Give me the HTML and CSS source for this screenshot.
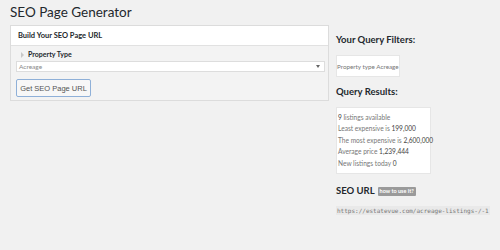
FILE: index.html
```html
<!DOCTYPE html>
<html lang="en">
<head>
    <meta charset="UTF-8">
    <title>SEO Page Generator</title>
    <link rel="stylesheet" href="styles.css">
</head>
<body>
    <div class="wrap">
        <h1>SEO Page Generator</h1>
        <div class="columns">
            <div class="main">
                <div class="panel">
                    <div class="panel-head">Build Your SEO Page URL</div>
                    <div class="panel-body">
                        <div class="field-label"><span class="toggle"></span>Property Type</div>
                        <div class="select">
                            <span>Acreage</span>
                            <span class="caret"></span>
                        </div>
                        <button class="btn">Get SEO Page URL</button>
                    </div>
                </div>
            </div>
            <div class="side">
                <h2>Your Query Filters:</h2>
                <div class="box filters">Property type Acreage</div>

                <h2>Query Results:</h2>
                <div class="box results">
                    <div><b>9</b> listings available</div>
                    <div>Least expensive is <b>199,000</b></div>
                    <div>The most expensive is <b>2,600,000</b></div>
                    <div>Average price <b>1,239,444</b></div>
                    <div>New listings today <b>0</b></div>
                </div>

                <h2 class="url-title">SEO URL <span class="badge">how to use it?</span></h2>
                <code class="url">https://estatevue.com/acreage-listings-/-1</code>
            </div>
        </div>
    </div>
</body>
</html>
```

FILE: styles.css
```css
* {
    margin: 0;
    padding: 0;
    box-sizing: border-box;
}

body {
    font-family: Lato, "Open Sans", sans-serif;
    background: #f1f1f1;
    color: #23282d;
    width: 500px;
    height: 250px;
    overflow: hidden;
}

.wrap {
    padding: 2px 0 0 10px;
}

h1 {
    font-size: 13.5px;
    font-weight: 400;
    line-height: 20px;
    margin-bottom: 3px;
}

.columns {
    display: flex;
    gap: 7px;
}

.main {
    width: 319px;
    flex-shrink: 0;
}

.panel {
    border: 1px solid #dcdcdc;
    background: #f3f3f3;
}

.panel-head {
    background: #fff;
    border-bottom: 1px solid #e1e1e1;
    font-size: 7.5px;
    font-weight: 700;
    line-height: 19px;
    padding-left: 7px;
}

.panel-body {
    padding: 3px 3px 3px 5px;
}

.field-label {
    display: flex;
    align-items: center;
    font-size: 7px;
    font-weight: 700;
    line-height: 11px;
    margin-bottom: 1px;
}

.toggle {
    width: 0;
    height: 0;
    border-top: 3px solid transparent;
    border-bottom: 3px solid transparent;
    border-left: 3px solid #c8c8c8;
    margin: 0 4px 0 5px;
}

.select {
    display: flex;
    justify-content: space-between;
    align-items: center;
    height: 11px;
    background: #fff;
    border: 1px solid #ddd;
    font-size: 6.5px;
    color: #888;
    padding: 0 4px 0 2px;
}

.caret {
    width: 0;
    height: 0;
    border-left: 2px solid transparent;
    border-right: 2px solid transparent;
    border-top: 3px solid #666;
}

.btn {
    display: block;
    margin-top: 7px;
    width: 75px;
    height: 18px;
    font-family: "Liberation Sans", sans-serif;
    font-size: 7.5px;
    color: #555;
    background: #f7f7f7;
    border: 1px solid #8fb0d8;
    border-radius: 2px;
}

.side {
    flex: 1;
    padding-top: 8px;
}

h2 {
    font-size: 9.5px;
    font-weight: 700;
    line-height: 14px;
    margin-bottom: 8px;
}

.box {
    background: #fff;
    border: 1px solid #e6e6e6;
    color: #777;
    white-space: nowrap;
}

.filters {
    display: inline-block;
    font-size: 6.3px;
    padding: 6px 0 5px 0;
    line-height: 9px;
    margin-bottom: 8px;
    vertical-align: top;
}

.results {
    width: 95px;
    padding: 4px 0 4px 1px;
    font-size: 6.6px;
    line-height: 11.4px;
    margin-bottom: 10px;
}

.results b {
    font-weight: 400;
    color: #444;
}

.url-title {
    display: flex;
    align-items: center;
    gap: 3px;
    margin-bottom: 8px;
}

.badge {
    background: #9a9a9a;
    color: #fff;
    font-size: 5.5px;
    font-weight: 700;
    line-height: 9px;
    padding: 0 2px;
    border-radius: 1px;
}

.url {
    display: block;
    width: fit-content;
    font-family: "DejaVu Sans Mono", monospace;
    font-size: 6px;
    color: #777;
    background: #e9e9e9;
    padding: 0 1px;
    line-height: 9px;
}
```
